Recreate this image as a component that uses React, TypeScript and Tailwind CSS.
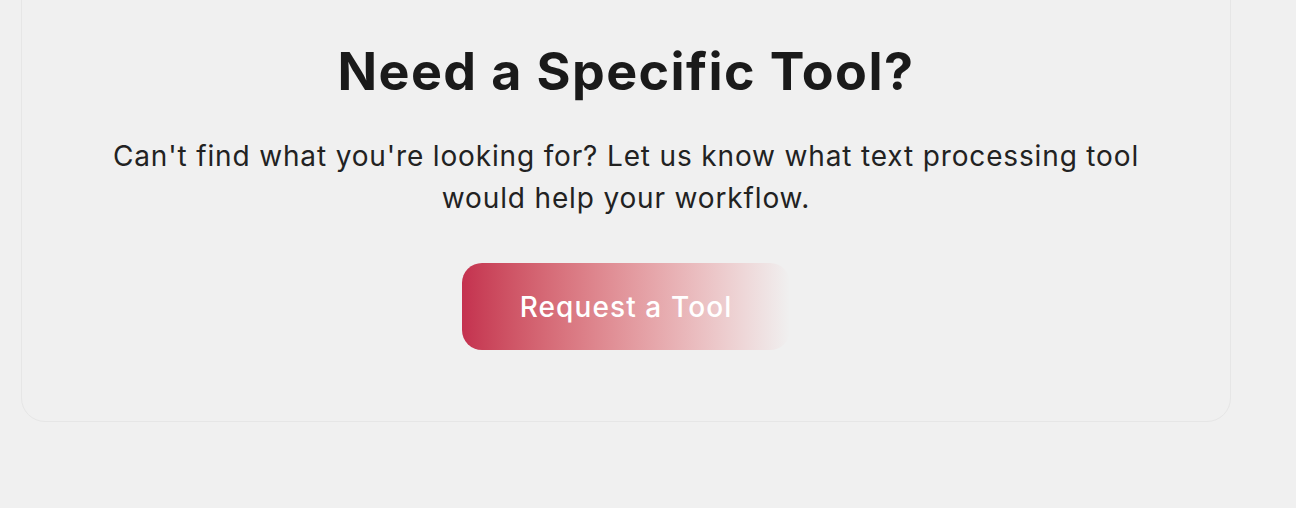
export default function App() {
  return (
    <div className="h-[508px] w-full overflow-hidden bg-[#f0f0f0] font-['Inter',sans-serif]">
      <div className="ml-[21px] -mt-[60px] w-[1210px] rounded-[24px] border border-[#e6e6e6] px-10 pt-[99px] pb-[71px]">
        <div className="flex flex-col items-center text-center">
          <h2 className="text-[52px] font-bold leading-[64px] tracking-[1.4px] text-[#1a1a1a]">
            Need a Specific Tool?
          </h2>
          <p className="mt-[31px] max-w-[1060px] text-[28px] leading-[42px] tracking-[0.85px] text-[#222222]">
            Can't find what you're looking for? Let us know what text processing tool would help your workflow.
          </p>
          <button className="mt-[44px] h-[87px] rounded-[20px] bg-gradient-to-r from-[#c4314f] to-[#f0f0f0] px-[58px] text-[28px] font-medium tracking-[1.1px] text-white">
            Request a Tool
          </button>
        </div>
      </div>
    </div>
  );
}
